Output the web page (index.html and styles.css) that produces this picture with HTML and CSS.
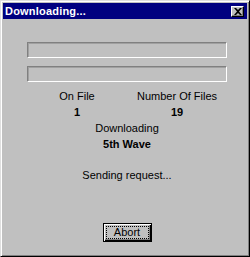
FILE: index.html
```html
<!DOCTYPE html>
<html lang="en">
<head>
  <meta charset="UTF-8" />
  <title>Downloading...</title>
  <link rel="stylesheet" href="styles.css">
</head>
<body>
  <div class="window">
    <div class="title-bar">
      <span class="title-text">Downloading...</span>
      <button class="close-btn" aria-label="Close">
        <svg width="8" height="7" viewBox="0 0 8 7"><path d="M0 0h2l2 2 2-2h2L5 3.5 8 7H6L4 5 2 7H0l3-3.5z" fill="#000"/></svg>
      </button>
    </div>

    <div class="content">
      <div class="field"></div>
      <div class="field"></div>

      <div class="stats">
        <div class="stat">On File</div>
        <div class="stat">Number Of Files</div>
        <div class="stat value">1</div>
        <div class="stat value">19</div>
        <div class="stat wide">Downloading</div>
        <div class="stat wide value">5th Wave</div>
      </div>

      <div class="status">Sending request...</div>

      <div class="actions">
        <button class="abort-btn"><span class="focus">Abort</span></button>
      </div>
    </div>
  </div>
</body>
</html>
```

FILE: styles.css
```css
body {
  margin: 0;
  background: #c0c0c0;
  font-family: 'Liberation Sans', Arial, sans-serif;
  font-size: 11px;
  color: #000;
}

.window {
  width: 250px;
  height: 257px;
  box-sizing: border-box;
  background: #c0c0c0;
  border: 1px solid;
  border-color: #dfdfdf #000 #000 #dfdfdf;
  box-shadow: inset 1px 1px #fff, inset -1px -1px #808080;
  padding: 2px;
  display: flex;
  flex-direction: column;
}

.title-bar {
  height: 16px;
  background: #000080;
  display: flex;
  align-items: center;
  justify-content: space-between;
  padding: 0 2px 0 2px;
}

.title-text {
  color: #fff;
  font-weight: bold;
  font-size: 11px;
  letter-spacing: 0.2px;
}

.close-btn {
  width: 13px;
  height: 11px;
  padding: 0;
  margin-right: 1px;
  background: #c0c0c0;
  border: 1px solid;
  border-color: #fff #000 #000 #fff;
  box-shadow: inset -1px -1px #808080;
  display: flex;
  align-items: center;
  justify-content: center;
}

.content {
  flex: 1;
  display: flex;
  flex-direction: column;
  padding: 23px 0 0 24px;
}

.field {
  width: 200px;
  height: 16px;
  box-sizing: border-box;
  border: 1px solid;
  border-color: #808080 #fff #fff #808080;
  box-shadow: inset 1px 1px #a0a0a0;
  margin-bottom: 8px;
}

.stats {
  display: grid;
  grid-template-columns: 100px 100px;
  margin-top: -2px;
}

.stat {
  text-align: center;
  line-height: 16px;
}

.stat.wide {
  grid-column: 1 / 3;
}

.value {
  font-weight: bold;
}

.status {
  width: 200px;
  text-align: center;
  line-height: 16px;
  margin-top: 15px;
}

.actions {
  width: 200px;
  display: flex;
  justify-content: center;
  margin-top: 40px;
}

.abort-btn {
  width: 49px;
  height: 19px;
  box-sizing: border-box;
  padding: 2px;
  background: #c0c0c0;
  border: 1px solid #000;
  box-shadow: inset 1px 1px #fff, inset -1px -1px #000, inset -2px -2px #808080;
  font-family: 'Liberation Sans', Arial, sans-serif;
  font-size: 11px;
  color: #000;
  display: flex;
}

.focus {
  flex: 1;
  border: 1px dotted #000;
  line-height: 11px;
  text-align: center;
}
```
